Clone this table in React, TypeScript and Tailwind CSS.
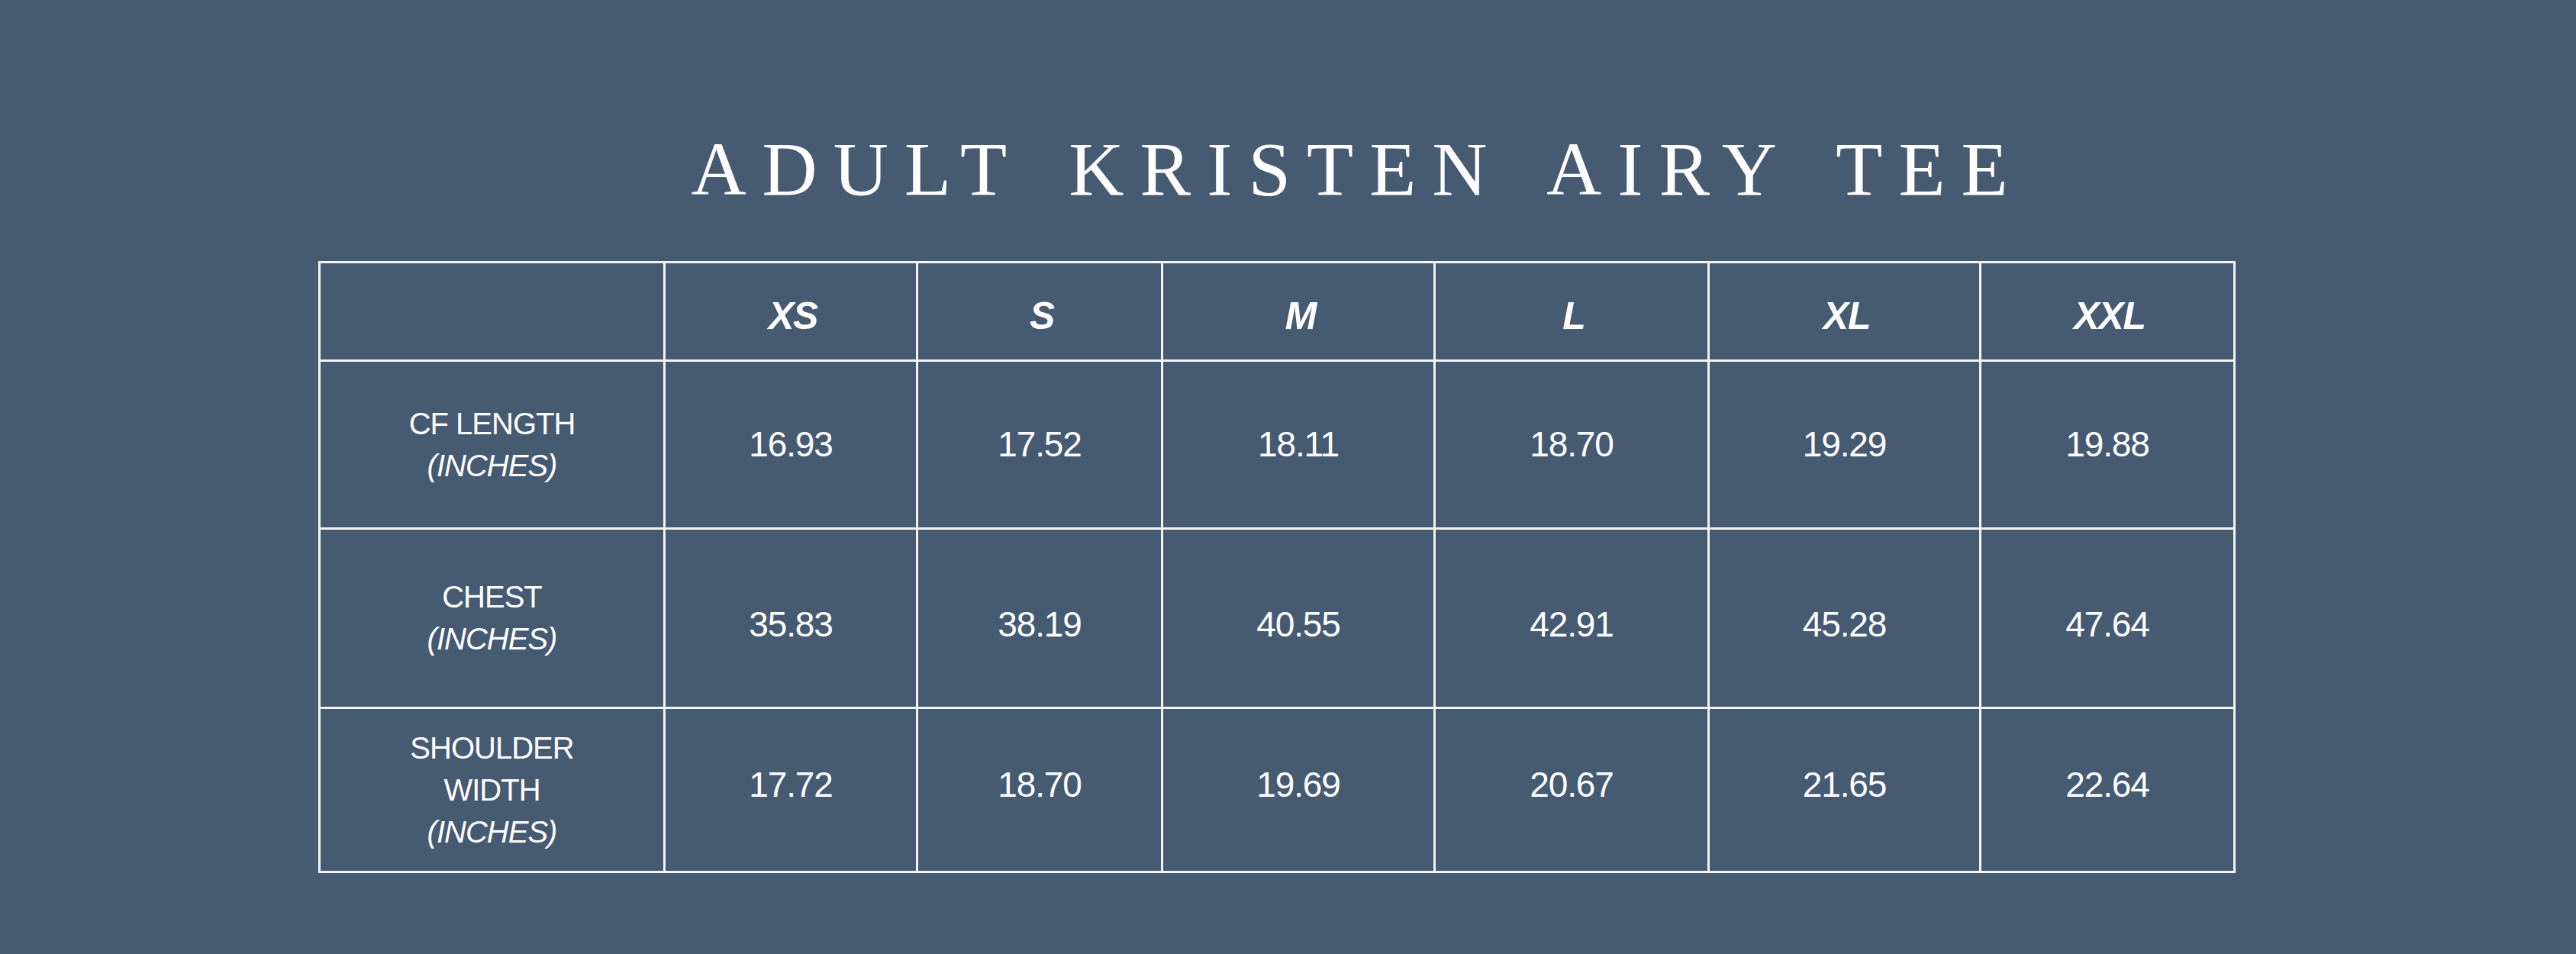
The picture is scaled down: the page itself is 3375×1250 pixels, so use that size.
import React from 'react';

const sizes = ['XS', 'S', 'M', 'L', 'XL', 'XXL'];

const rows: { label: string[]; values: string[]; height: string; shift: string }[] = [
  { label: ['CF LENGTH'], values: ['16.93', '17.52', '18.11', '18.70', '19.29', '19.88'], height: 'h-[220px]', shift: '' },
  { label: ['CHEST'], values: ['35.83', '38.19', '40.55', '42.91', '45.28', '47.64'], height: 'h-[235px]', shift: 'pt-[16px]' },
  { label: ['SHOULDER', 'WIDTH'], values: ['17.72', '18.70', '19.69', '20.67', '21.65', '22.64'], height: 'h-[215px]', shift: 'pb-[14px]' },
];

const colWidths = ['w-[452px]', 'w-[331px]', 'w-[321px]', 'w-[357px]', 'w-[359px]', 'w-[356px]', 'w-[333px]'];

const App: React.FC = () => {
  return (
    <div className="w-full h-[1250px] bg-[#465a72] text-white overflow-hidden">
      {/* Title */}
      <h1 className="pt-[172px] pl-[182px] text-center text-[100px] leading-none font-normal tracking-[21px] [word-spacing:16px] font-['Liberation_Serif',serif]">
        ADULT KRISTEN AIRY TEE
      </h1>

      {/* Size chart */}
      <table className="mt-[70px] ml-[417px] w-[2512px] table-fixed border-collapse font-['Liberation_Sans',Arial,sans-serif]">
        <colgroup>
          {colWidths.map((w, i) => (
            <col key={i} className={w} />
          ))}
        </colgroup>
        <thead>
          <tr className="h-[129px]">
            <th className="border-[3px] border-[#f4f4f4]" />
            {sizes.map((s) => (
              <th key={s} className="border-[3px] border-[#f4f4f4] pt-[12px] pl-[6px] text-[50px] font-bold italic text-center tracking-tight">
                {s}
              </th>
            ))}
          </tr>
        </thead>
        <tbody>
          {rows.map((r) => (
            <tr key={r.label.join(' ')} className={r.height}>
              <td className="border-[3px] border-[#f4f4f4] text-center text-[40px] leading-[55px] tracking-tight">
                {r.label.map((l) => (
                  <div key={l}>{l}</div>
                ))}
                <div className="italic">(INCHES)</div>
              </td>
              {r.values.map((v, i) => (
                <td key={i} className={`border-[3px] border-[#f4f4f4] text-center text-[46px] tracking-tight ${r.shift}`}>
                  {v}
                </td>
              ))}
            </tr>
          ))}
        </tbody>
      </table>
    </div>
  );
};

export default App;
